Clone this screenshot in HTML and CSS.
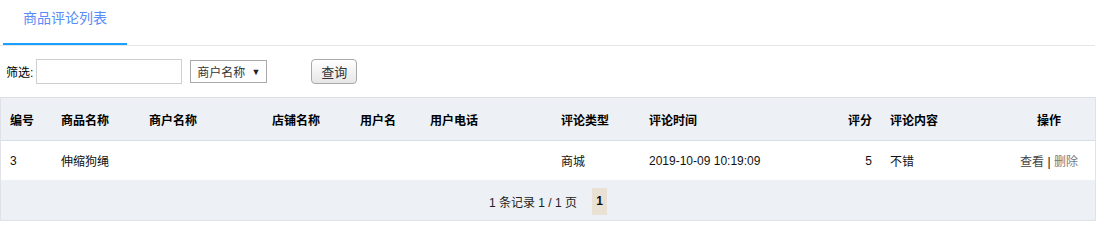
FILE: index.html
```html
<!DOCTYPE html>
<html lang="zh">
<head>
<meta charset="utf-8">
<title>商品评论列表</title>
<link rel="stylesheet" href="styles.css">
</head>
<body>
<div class="page">
  <div class="tabs">
    <div class="tab active">商品评论列表</div>
  </div>
  <div class="filter">
    <label class="filter-label">筛选:</label>
    <input class="filter-input" type="text">
    <div class="select"><span class="select-text">商户名称</span><span class="select-arrow">▼</span></div>
    <button class="btn">查询</button>
  </div>
  <div class="table-wrap">
    <table class="grid">
      <colgroup>
        <col class="c1"><col class="c2"><col class="c3"><col class="c4"><col class="c5"><col class="c6">
        <col class="c7"><col class="c8"><col class="c9"><col class="c10"><col class="c11">
      </colgroup>
      <thead>
        <tr>
          <th>编号</th><th>商品名称</th><th>商户名称</th><th>店铺名称</th><th>用户名</th><th>用户电话</th>
          <th>评论类型</th><th>评论时间</th><th class="right">评分</th><th>评论内容</th><th class="center">操作</th>
        </tr>
      </thead>
      <tbody>
        <tr>
          <td>3</td><td>伸缩狗绳</td><td></td><td></td><td></td><td></td>
          <td>商城</td><td>2019-10-09 10:19:09</td><td class="right">5</td><td>不错</td>
          <td class="center"><a class="op-view" href="#">查看</a> | <a class="op-del" href="#">删除</a></td>
        </tr>
      </tbody>
      <tfoot>
        <tr>
          <td colspan="11">
            <div class="pager"><span class="pager-info">1 条记录 1 / 1 页</span><span class="pager-cur">1</span></div>
          </td>
        </tr>
      </tfoot>
    </table>
  </div>
</div>
</body>
</html>
```
FILE: styles.css
```css
html, body {
  margin: 0;
  padding: 0;
  background: #fff;
}
body {
  font-family: "Liberation Sans", Arial, "Noto Sans CJK SC", sans-serif;
  font-size: 12px;
  color: #333;
}
.page {
  width: 1096px;
}
.tabs {
  display: flex;
  height: 45px;
  border-bottom: 1px solid #e6e6e6;
  width: 1095px;
}
.tab {
  margin-left: 3px;
  width: 124px;
  height: 43px;
  line-height: 36px;
  text-align: center;
  font-size: 14px;
  color: #5a8cf7;
  border-bottom: 2px solid #1aa1ff;
}
.filter {
  display: flex;
  align-items: center;
  height: 51px;
  padding-left: 6px;
}
.filter-label {
  color: #000;
  margin-right: 3px;
}
.filter-input {
  box-sizing: border-box;
  width: 146px;
  height: 25px;
  border: 1px solid #cfcfcf;
  margin: 0;
  padding: 0 4px;
  outline: none;
}
.select {
  box-sizing: border-box;
  display: flex;
  align-items: center;
  margin-left: 8px;
  width: 77px;
  height: 23px;
  border: 1px solid #a9a9a9;
  padding-left: 6px;
  color: #333;
  font-size: 12px;
}
.select-text {
  flex: 1;
}
.select-arrow {
  font-size: 9px;
  color: #222;
  margin-right: 6px;
}
.btn {
  box-sizing: border-box;
  margin-left: 44px;
  width: 46px;
  height: 25px;
  border: 1px solid #a9a9a9;
  border-radius: 4px;
  background: linear-gradient(#ffffff, #e6e6e6);
  font-family: "Liberation Sans", "Noto Sans CJK SC", sans-serif;
  font-size: 13px;
  color: #333;
  padding: 0;
}
.table-wrap {
  box-sizing: border-box;
  width: 1096px;
  border: 1px solid #dfe3e8;
  border-top-color: #dcdfe3;
}
.grid {
  width: 100%;
  border-collapse: collapse;
  table-layout: fixed;
}
.c1 { width: 51px; }
.c2 { width: 88px; }
.c3 { width: 123px; }
.c4 { width: 88px; }
.c5 { width: 70px; }
.c6 { width: 131px; }
.c7 { width: 88px; }
.c8 { width: 160px; }
.c9 { width: 81px; }
.c10 { width: 122px; }
.c11 { width: 92px; }
.grid th, .grid td {
  padding: 0 9px;
  text-align: left;
  white-space: nowrap;
}
.grid th {
  height: 42px;
  background: #edf1f5;
  border-bottom: 1px solid #d6dee7;
  font-weight: bold;
  color: #000;
}
.grid tbody td {
  height: 39px;
  background: #fff;
  color: #111;
}
.grid .right { text-align: right; }
.grid .center { text-align: center; }
.grid tfoot td {
  height: 40px;
  background: #edf1f5;
  padding: 0;
}
.op-view {
  color: #444;
  text-decoration: none;
}
.op-del {
  color: #7a7a7a;
  text-decoration: none;
}
.pager {
  display: flex;
  justify-content: center;
  align-items: center;
  gap: 15px;
  color: #222;
  padding-top: 2px;
}
.pager-cur {
  display: inline-block;
  width: 15px;
  height: 27px;
  line-height: 27px;
  text-align: center;
  background: #e8e1d4;
  font-weight: bold;
  color: #111;
}
```
